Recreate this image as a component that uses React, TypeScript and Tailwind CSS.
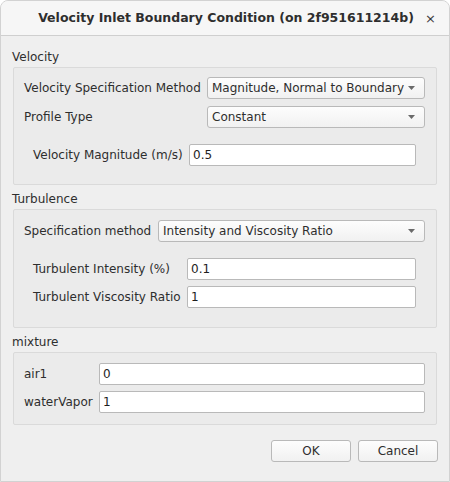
const font = { fontFamily: '"DejaVu Sans", "Liberation Sans", sans-serif' };

function Combo({ value, className = "" }: { value: string; className?: string }) {
  return (
    <div
      className={`flex h-[22px] items-center justify-between rounded-[3px] border border-[#b9b9b9] bg-gradient-to-b from-[#fdfdfd] to-[#f1f1f1] pl-[4px] pr-[9px] text-[12px] text-[#2e2e2e] ${className}`}
    >
      <span>{value}</span>
      <svg width="7" height="4" viewBox="0 0 7 4">
        <path d="M0 0 L7 0 L3.5 4 Z" fill="#6a6a6a" />
      </svg>
    </div>
  );
}

function Field({ value, className = "" }: { value: string; className?: string }) {
  return (
    <div
      className={`flex h-[22px] items-center rounded-[2px] border border-[#b9b9b9] bg-white pl-[3px] text-[12px] text-[#1e1e1e] ${className}`}
    >
      {value}
    </div>
  );
}

function Group({ title, children, className = "" }: { title: string; children: React.ReactNode; className?: string }) {
  return (
    <div className="flex flex-col">
      <div className="mt-[3px] h-[15px] pl-[11px] text-[12px] leading-[15px] text-[#2e2e2e]">{title}</div>
      <div className={`mx-[12px] mt-[2px] rounded-[2px] border border-[#dadada] bg-[#ebebeb] ${className}`}>
        {children}
      </div>
    </div>
  );
}

export default function App() {
  return (
    <div
      className="flex h-[482px] w-[450px] flex-col overflow-hidden rounded-t-[8px] border border-[#d2d2d2] bg-[#efefef]"
      style={font}
    >
      <div className="relative flex h-[35px] shrink-0 items-center justify-center border-b border-[#cfcfcf] bg-[#f6f6f6]">
        <span className="pl-[2px] text-[12.5px] font-bold text-[#2e2e2e]">
          Velocity Inlet Boundary Condition (on 2f951611214b)
        </span>
        <span className="absolute right-[13px] top-[8px] text-[13px] text-[#3a3a3a]">×</span>
      </div>

      <div className="flex flex-col pt-[11px]">
        <Group title="Velocity" className="h-[118px] pt-[9px]">
          <div className="flex items-center pl-[10px] pr-[11px] text-[12px] text-[#2e2e2e]">
            <span className="w-[183px]">Velocity Specification Method</span>
            <Combo value="Magnitude, Normal to Boundary" className="flex-1" />
          </div>
          <div className="mt-[7px] flex items-center pl-[10px] pr-[11px] text-[12px] text-[#2e2e2e]">
            <span className="w-[183px]">Profile Type</span>
            <Combo value="Constant" className="flex-1" />
          </div>
          <div className="mt-[16px] flex items-center pl-[19px] pr-[20px] text-[12px] text-[#2e2e2e]">
            <span className="w-[156px]">Velocity Magnitude (m/s)</span>
            <Field value="0.5" className="flex-1" />
          </div>
        </Group>

        <div className="mt-[4px]">
          <Group title="Turbulence" className="h-[119px] pt-[10px]">
            <div className="flex items-center pl-[10px] pr-[11px] text-[12px] text-[#2e2e2e]">
              <span className="w-[134px]">Specification method</span>
              <Combo value="Intensity and Viscosity Ratio" className="flex-1" />
            </div>
            <div className="mt-[16px] flex items-center pl-[19px] pr-[20px] text-[12px] text-[#2e2e2e]">
              <span className="w-[154px]">Turbulent Intensity (%)</span>
              <Field value="0.1" className="flex-1" />
            </div>
            <div className="mt-[6px] flex items-center pl-[19px] pr-[20px] text-[12px] text-[#2e2e2e]">
              <span className="w-[154px]">Turbulent Viscosity Ratio</span>
              <Field value="1" className="flex-1" />
            </div>
          </Group>
        </div>

        <div className="mt-[4px]">
          <Group title="mixture" className="h-[73px] pt-[10px]">
            <div className="flex items-center pl-[10px] pr-[11px] text-[12px] text-[#2e2e2e]">
              <span className="w-[75px]">air1</span>
              <Field value="0" className="flex-1" />
            </div>
            <div className="mt-[6px] flex items-center pl-[10px] pr-[11px] text-[12px] text-[#2e2e2e]">
              <span className="w-[75px]">waterVapor</span>
              <Field value="1" className="flex-1" />
            </div>
          </Group>
        </div>

        <div className="mt-[15px] flex justify-end gap-[7px] pr-[11px]">
          <button className="h-[22px] w-[80px] rounded-[3px] border border-[#b9b9b9] bg-gradient-to-b from-[#fdfdfd] to-[#f1f1f1] text-[12px] text-[#2e2e2e]">
            OK
          </button>
          <button className="h-[22px] w-[80px] rounded-[3px] border border-[#b9b9b9] bg-gradient-to-b from-[#fdfdfd] to-[#f1f1f1] text-[12px] text-[#2e2e2e]">
            Cancel
          </button>
        </div>
      </div>
    </div>
  );
}
